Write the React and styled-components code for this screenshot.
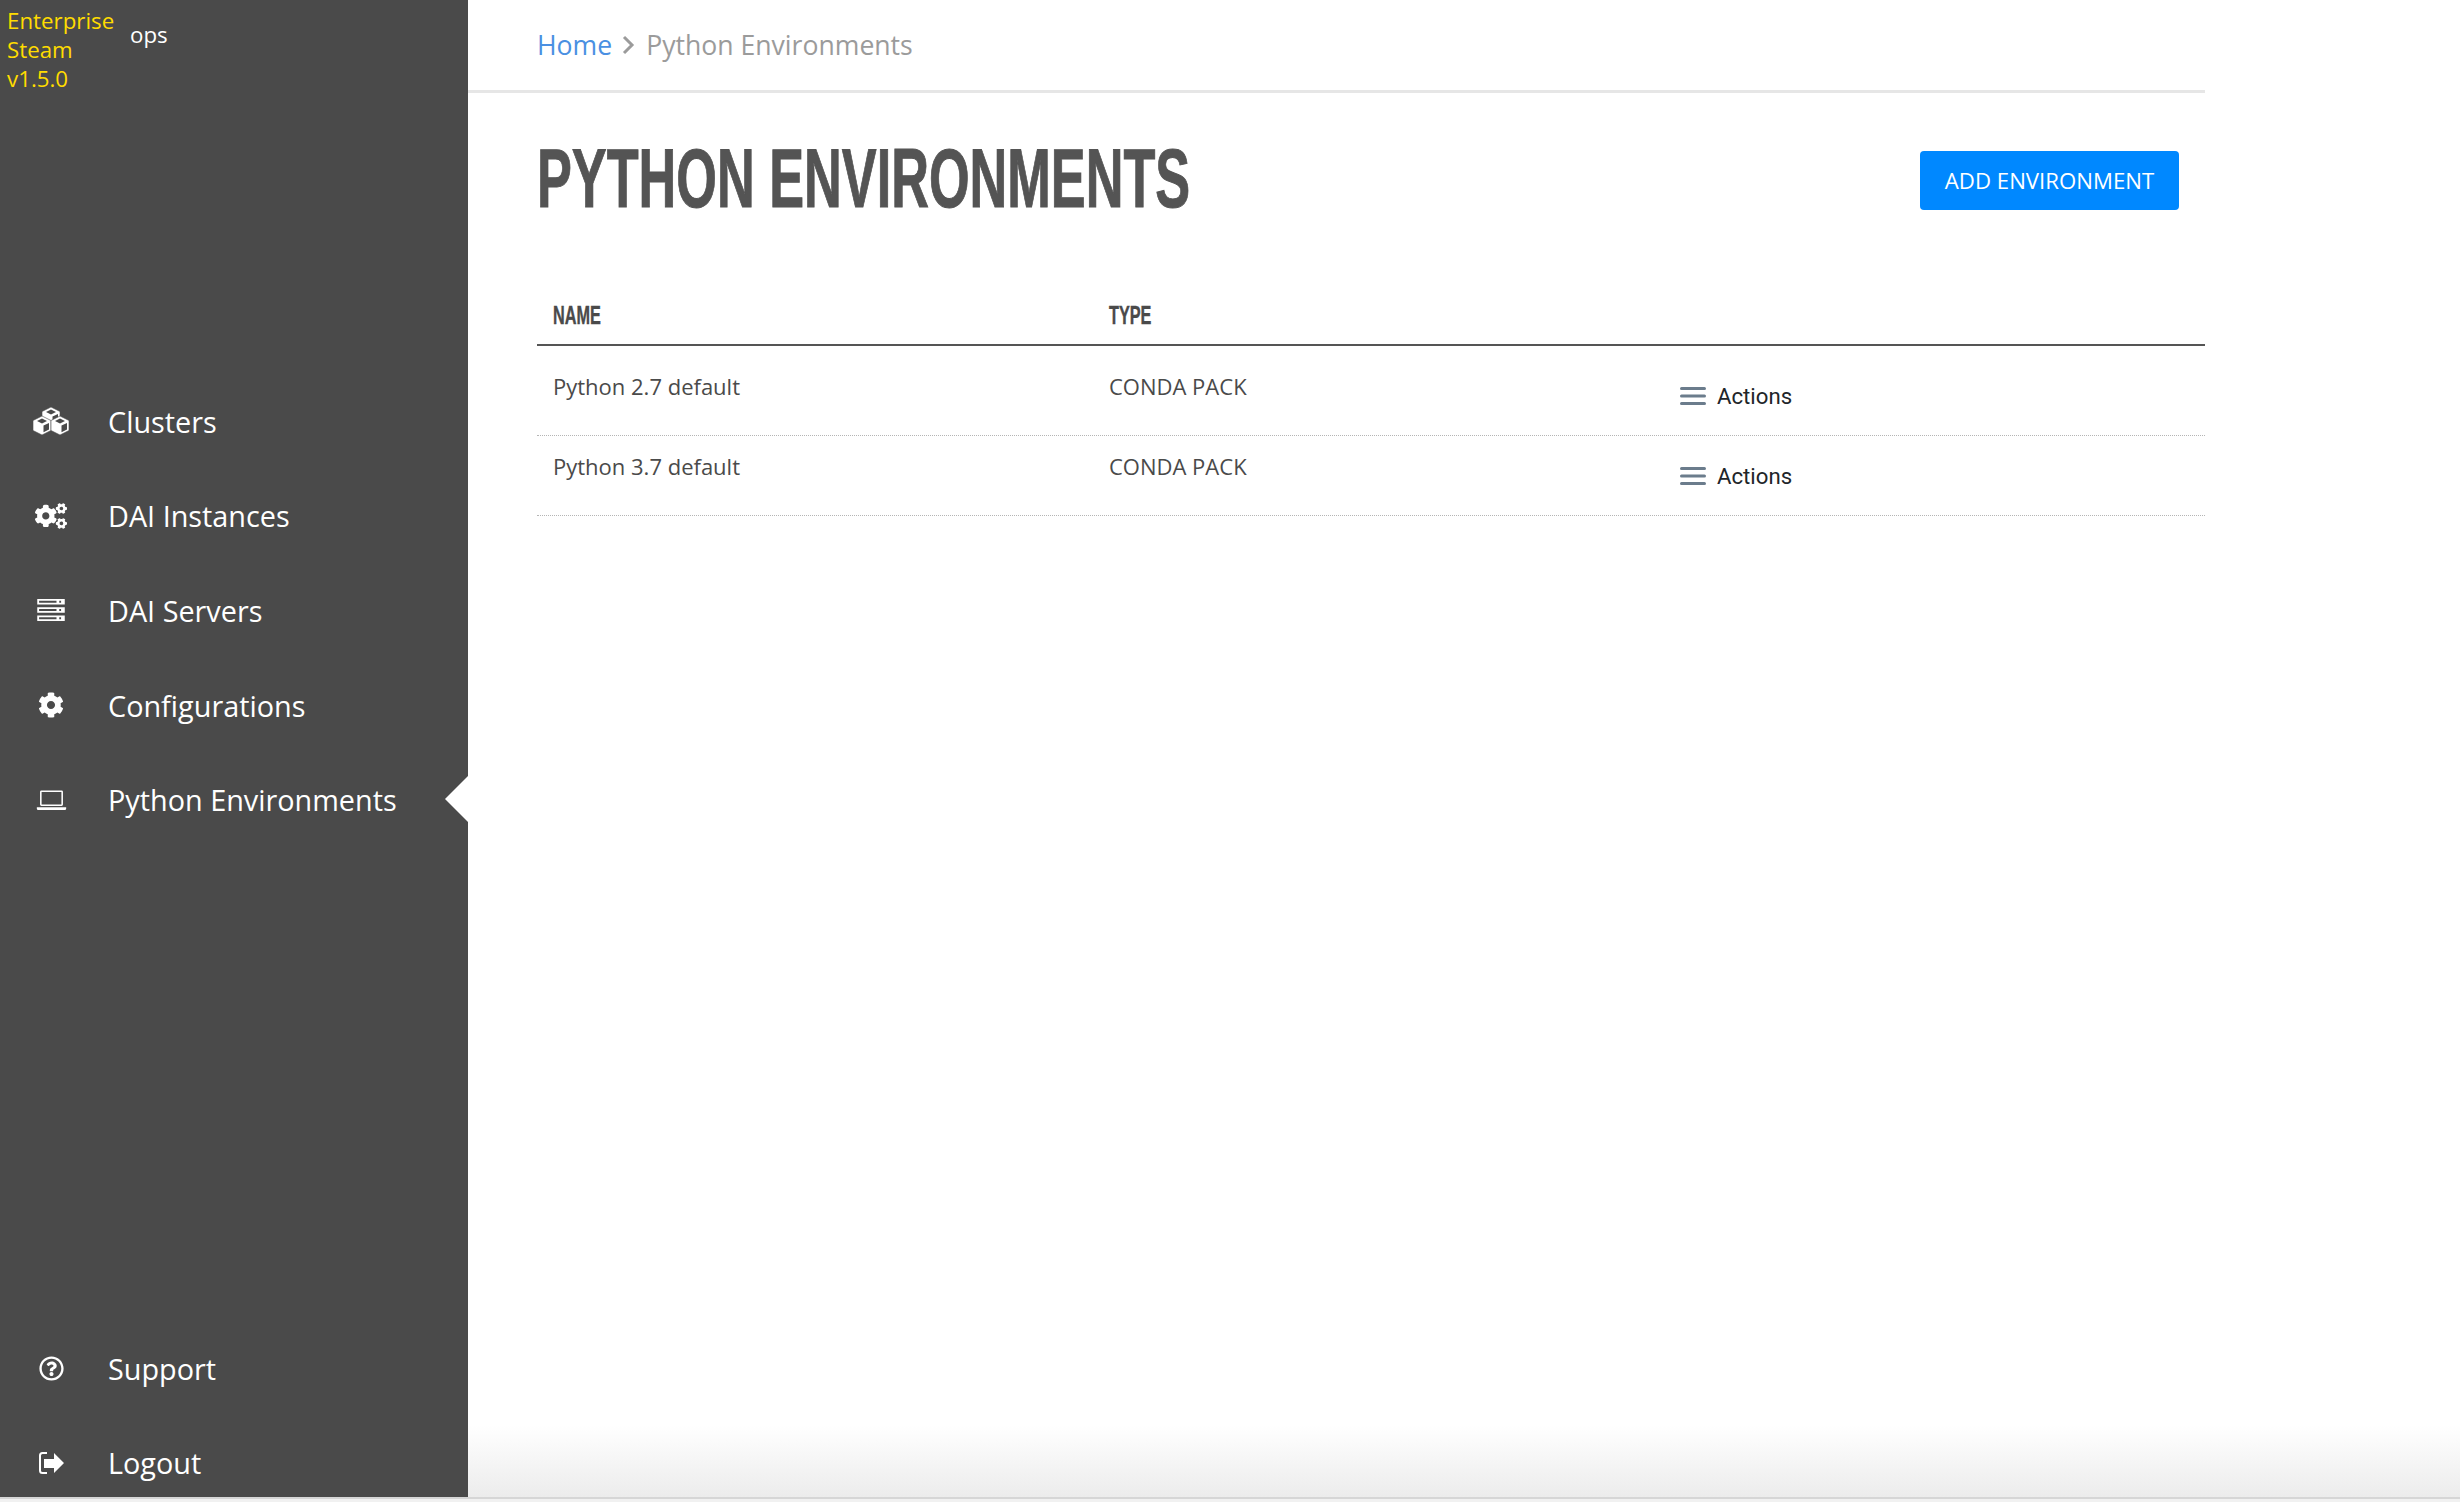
import React from 'react';
import styled, { createGlobalStyle } from 'styled-components';
import { FaCogs, FaCog, FaRegQuestionCircle } from 'react-icons/fa';

const GlobalStyle = createGlobalStyle`
	html, body {
		margin: 0;
		padding: 0;
		background: #fff;
		font-family: "Open Sans", sans-serif;
	}
`;

const Page = styled.div`
	width: 2460px;
	height: 1502px;
	display: flex;
	flex-direction: column;
	overflow: hidden;
	background: #f1f1f1;
`;

const Body = styled.div`
	flex: 0 0 1497px;
	display: flex;
	background: linear-gradient(to bottom, #fff 0, #fff 1425px, #ececec 1497px);
	border-bottom: 2px solid #d6d6d6;
`;

const Sidebar = styled.aside`
	width: 468px;
	display: flex;
	flex-direction: column;
	background: #4a4a4a;
	color: #fff;
	overflow: hidden;
`;

const Brand = styled.div`
	height: 374px;
	display: flex;
	align-items: flex-start;
	padding: 6px 0 0 7px;
	box-sizing: border-box;
	font-size: 22.3px;
	line-height: 29px;
`;

const BrandName = styled.div`
	width: 123px;
	color: #ffdc00;
`;

const User = styled.div`
	margin-top: 14px;
`;

const Nav = styled.nav`
	display: flex;
	flex-direction: column;
	flex: 1;
	margin-bottom: -13px;
`;

const NavItem = styled.a`
	position: relative;
	height: 94.6px;
	display: flex;
	align-items: center;
	font-size: 28.8px;
	color: #fff;

	${(p) => p.$active && `
		&::after {
			content: '';
			position: absolute;
			right: 0;
			top: 24px;
			border-style: solid;
			border-width: 23px 23px 23px 0;
			border-color: transparent #fff transparent transparent;
		}
	`}
`;

const NavIcon = styled.span`
	width: 108px;
	padding-right: 6px;
	box-sizing: border-box;
	display: flex;
	align-items: center;
	justify-content: center;

	svg {
		display: block;
		width: ${(p) => p.$w}px;
		height: ${(p) => p.$h}px;
		fill: #fff;
	}
`;

const Spacer = styled.div`
	flex: 1;
`;

const Main = styled.main`
	width: 1737px;
	display: flex;
	flex-direction: column;
`;

const Breadcrumbs = styled.div`
	height: 90px;
	padding-left: 69px;
	display: flex;
	align-items: center;
	gap: 10px;
	border-bottom: 3px solid #e6e6e6;
	font-size: 26.6px;
	color: #9b9b9b;
`;

const HomeLink = styled.a`
	color: #4a90e2;
`;

const TitleRow = styled.div`
	display: flex;
	justify-content: space-between;
	align-items: flex-start;
	padding: 58px 26px 0 69px;
	height: 196px;
	box-sizing: border-box;
`;

const Title = styled.h1`
	margin: -9px 0 0;
	font-family: "Liberation Sans Narrow", "Liberation Sans", sans-serif;
	font-weight: 700;
	font-size: 84px;
	line-height: 72px;
	color: #545454;
	white-space: nowrap;
	transform: scaleX(0.622);
	transform-origin: left center;
	-webkit-text-stroke: 1px #545454;
`;

const AddButton = styled.button`
	height: 59px;
	width: 259px;
	border: none;
	border-radius: 4px;
	background: #0088ff;
	color: #fff;
	font-family: "Open Sans", sans-serif;
	font-size: 22.2px;
`;

const Table = styled.div`
	margin-left: 69px;
	display: flex;
	flex-direction: column;
`;

const columns = `
	display: grid;
	grid-template-columns: 556px 571px 1fr;
	padding-left: 16px;
`;

const HeadRow = styled.div`
	${columns}
	height: 57px;
	align-items: center;
	padding-bottom: 3px;
	border-bottom: 2px solid #555;
	box-sizing: border-box;
`;

const HeadCell = styled.div`
	font-family: "Liberation Sans Narrow", "Liberation Sans", sans-serif;
	font-weight: 700;
	font-size: 25px;
	color: #4a4a4a;
	transform: scaleX(0.65);
	transform-origin: left center;
	-webkit-text-stroke: 0.4px #4a4a4a;
`;

const Row = styled.div`
	${columns}
	height: ${(p) => p.$h}px;
	border-bottom: 1px dotted #b5b5b5;
	box-sizing: border-box;
`;

const Cell = styled.div`
	font-size: 22px;
	color: #4a4a4a;
	padding-top: ${(p) => p.$top}px;
`;

const Actions = styled.div`
	display: flex;
	align-items: center;
	gap: 11px;
	margin-top: ${(p) => p.$top}px;
	height: 40px;
	font-family: Roboto, sans-serif;
	font-size: 22.2px;
	color: #212529;
`;

const cubes = [[18, 10], [9, 19], [27, 19]];

const CubesIcon = () => (
	<svg viewBox="0 0 36 29">
		{cubes.map(([x, y]) => (
			<g key={`${x}-${y}`}>
				<path d={`M${x} ${y - 10}l9 4.500v10l-9 4.500-9-4.500v-10z`} fill="#fff" stroke="#4a4a4a" strokeWidth="0.6" />
				<path d={`M${x} ${y - 7.500}l5 2.500-5 2.500-5-2.500z`} fill="#4a4a4a" />
				<path d={`M${x + 1.500} ${y - 0.500}l5.500-2.500v6.500l-5.500 2.800z`} fill="#4a4a4a" />
			</g>
		))}
	</svg>
);

const LaptopIcon = () => (
	<svg viewBox="0 0 32 24">
		<path d="M5 1.5h22a1.5 1.5 0 0 1 1.5 1.5v14a1.5 1.5 0 0 1-1.5 1.5H5A1.5 1.5 0 0 1 3.5 17V3A1.5 1.5 0 0 1 5 1.5zm.2 1.7v13.6h21.6V3.200zM0 20h32v1.500c0 .9-.8 1.500-2 1.500H2c-1.200 0-2-.6-2-1.500z" fillRule="evenodd" />
	</svg>
);

const ServerIcon = () => (
	<svg viewBox="0 0 32 24">
		<path d="M1 0h30v6H1zm2 2v2h19V2zm22 0v2h2V2zM1 9h30v6H1zm2 2v2h19v-2zm22 0v2h2v-2zM1 18h30v6H1zm2 2v2h19v-2zm22 0v2h2v-2z" fillRule="evenodd" />
	</svg>
);

const LogoutIcon = () => (
	<svg viewBox="0 0 25 22">
		<path d="M3.500 0H8v2H3.500A1.500 1.500 0 0 0 2 3.500v15A1.500 1.500 0 0 0 3.500 20H8v2H3.500A3.500 3.500 0 0 1 0 18.500v-15A3.500 3.500 0 0 1 3.500 0z" />
		<path d="M15 1l10 10-10 10v-5H5V7h10z" />
	</svg>
);

const MenuIcon = () => (
	<svg width="26" height="18" viewBox="0 0 26 18" fill="#6b7c8c">
		<rect y="0" width="26" height="3" rx="1.500" />
		<rect y="7.500" width="26" height="3" rx="1.500" />
		<rect y="15" width="26" height="3" rx="1.500" />
	</svg>
);

const Chevron = () => (
	<svg width="14" height="20" viewBox="0 0 14 20" fill="none" stroke="#9b9b9b" strokeWidth="3">
		<path d="M2 2l8 8-8 8" />
	</svg>
);

const navItems = [
	{ label: 'Clusters', icon: <CubesIcon />, w: 36, h: 29 },
	{ label: 'DAI Instances', icon: <FaCogs />, w: 32, h: 28 },
	{ label: 'DAI Servers', icon: <ServerIcon />, w: 30, h: 22 },
	{ label: 'Configurations', icon: <FaCog />, w: 26, h: 26 },
	{ label: 'Python Environments', icon: <LaptopIcon />, w: 31, h: 22, active: true },
];

const envs = ['Python 2.7 default', 'Python 3.7 default'];

const App = () => (
	<>
		<GlobalStyle />
		<Page>
			<Body>
				<Sidebar>
					<Brand>
						<BrandName>Enterprise Steam v1.5.0</BrandName>
						<User>ops</User>
					</Brand>
					<Nav>
						{navItems.map((item) => (
							<NavItem key={item.label} $active={item.active}>
								<NavIcon $w={item.w} $h={item.h}>{item.icon}</NavIcon>
								{item.label}
							</NavItem>
						))}
						<Spacer />
						<NavItem>
							<NavIcon $w={25} $h={25}><FaRegQuestionCircle /></NavIcon>
							Support
						</NavItem>
						<NavItem>
							<NavIcon $w={25} $h={22}><LogoutIcon /></NavIcon>
							Logout
						</NavItem>
					</Nav>
				</Sidebar>
				<Main>
					<Breadcrumbs>
						<HomeLink>Home</HomeLink>
						<Chevron />
						<span>Python Environments</span>
					</Breadcrumbs>
					<TitleRow>
						<Title>PYTHON ENVIRONMENTS</Title>
						<AddButton>ADD ENVIRONMENT</AddButton>
					</TitleRow>
					<Table>
						<HeadRow>
							<HeadCell>NAME</HeadCell>
							<HeadCell>TYPE</HeadCell>
						</HeadRow>
						{envs.map((name, i) => (
							<Row key={name} $h={i === 0 ? 90 : 80}>
								<Cell $top={i === 0 ? 25 : 15}>{name}</Cell>
								<Cell $top={i === 0 ? 25 : 15}>CONDA PACK</Cell>
								<Actions $top={i === 0 ? 30 : 20}>
									<MenuIcon />
									Actions
								</Actions>
							</Row>
						))}
					</Table>
				</Main>
			</Body>
		</Page>
	</>
);

export default App;
